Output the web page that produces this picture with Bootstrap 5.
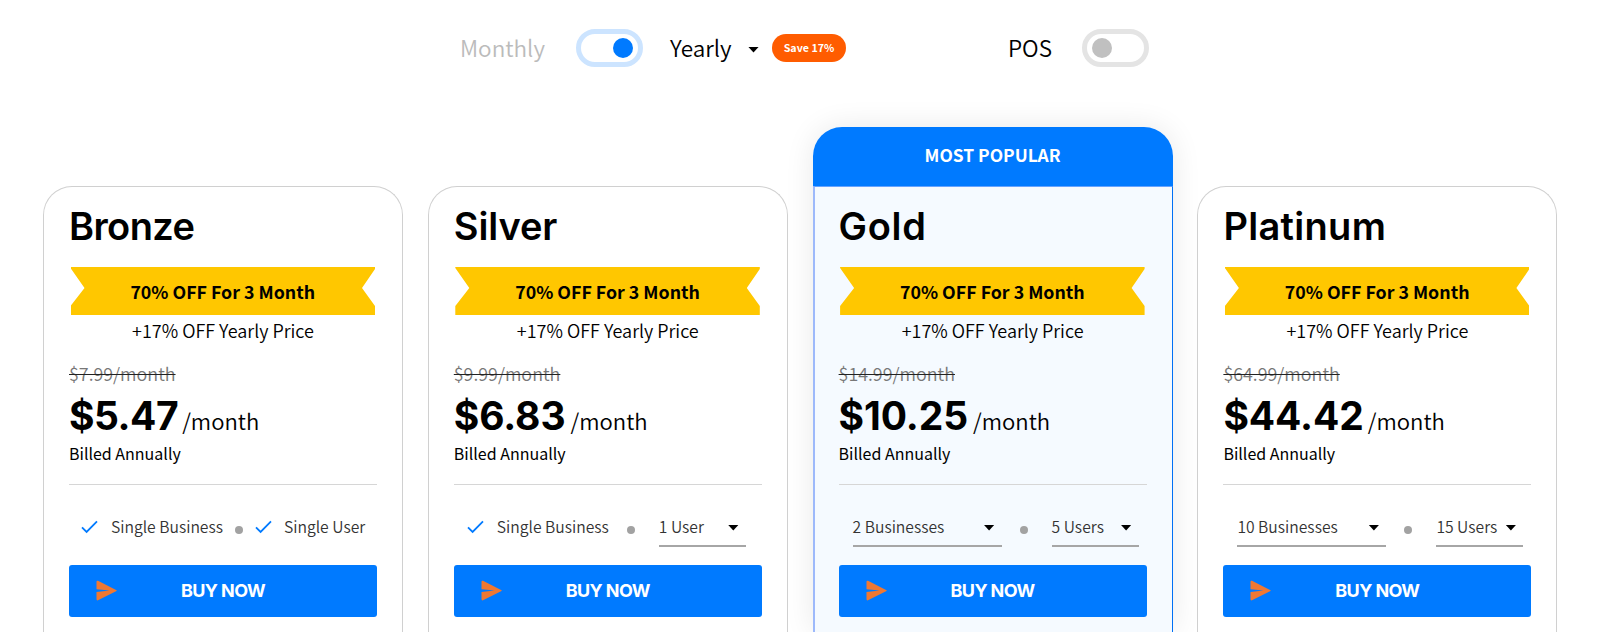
<!DOCTYPE html>
<html lang="en">
<head>
<meta charset="utf-8">
<meta name="viewport" content="width=device-width, initial-scale=1">
<title>Pricing</title>
<link rel="stylesheet" href="https://cdn.jsdelivr.net/npm/bootstrap@5.3.0/dist/css/bootstrap.min.css">
<style>
  body { font-family: "Noto Sans CJK SC", sans-serif; font-weight: 350; color: #000; background: #fff; height: 632px; overflow: hidden; }
  .topbar { height: 95px; padding-left: 460px; }
  .topbar-label { font-size: 22.5px; line-height: 36px; padding-bottom: 2px; }
  .off-label { color: #bbb; width: 116px; }
  .yearly { width: 78px; margin-left: 27px; }
  .pos-label { width: 74px; margin-left: 162px; }
  .toggle { width: 67px; height: 38px; border: 5px solid #cce4ff; border-radius: 19px; padding: 0 5px; }
  .toggle i { width: 20px; height: 20px; border-radius: 50%; background: #007aff; }
  .toggle.is-off { border-color: #e4e4e4; }
  .toggle.is-off i { background: #c0c0c0; }
  .caret { width: 11px; height: 6px; background: #000; clip-path: polygon(0 0, 100% 0, 50% 100%); flex: none; }
  .save { width: 74px; height: 28px; line-height: 27px; border-radius: 14px; background: #ff5c00; color: #fff; font-size: 10.7px; font-weight: 700; margin-left: 13px; }

  .plans { padding: 32px 42.6px 0 43px; gap: 24.8px; height: 537px; }
  .plan { flex: 1 1 0; min-width: 0; }
  .plan-body { margin-top: 59px; height: 446px; border: 1px solid #d0d0d0; border-bottom: 0; border-radius: 29px 29px 0 0; padding: 16px 25px 0; }
  .plan-top { height: 59px; background: #007aff; color: #fff; border-radius: 29px 29px 0 0; font-size: 17.4px; line-height: 56px; font-weight: 700; }
  .plan.popular { border-radius: 29px 29px 0 0; box-shadow: 0 0 30px rgba(0,0,0,.09); }
  .popular .plan-body { margin-top: 0; border-radius: 0; border-color: #66a3ff #0070f5 #66a3ff #9db9fb; background: #f5faff; }
  .popular .plan-body { border-left-width: 2px; padding-left: 24px; }
  .plan-name { font: 600 38px/44px Inter, sans-serif; margin: 0 0 19px; padding-top: 1px; }
  .name-bronze { letter-spacing: -.6px; }
  .name-silver { letter-spacing: -.1px; }
  .name-gold { letter-spacing: .7px; }
  .name-platinum { letter-spacing: .3px; }
  .ribbon { height: 48px; line-height: 48px; margin: 0 2px 0 1.5px; background: #ffc700; font-size: 17.8px; font-weight: 700; text-align: center;
    clip-path: polygon(0 0, 100% 0, 100% 2px, calc(100% - 13px) 21px, 100% 39px, 100% 100%, 0 100%, 0 39px, 14px 21px, 0 1px); }
  .extra { font-size: 18px; line-height: 30px; height: 28px; text-align: center; }
  .was { font-size: 17.9px; line-height: 28px; margin-top: 16px; color: #777; }
  .was s { text-decoration: line-through #222 1px; }
  .price { height: 44px; margin-top: 7px; line-height: 44px; }
  .amount { font: 700 39px/44px Inter, sans-serif; letter-spacing: -.1px; }
  .amount-tight { letter-spacing: -.5px; }
  .per { font-size: 22.1px; margin-left: 4px; }
  .billed { font-size: 16px; line-height: 24px; margin-top: 3px; font-weight: 400; }
  .rule { height: 1px; background: #d6d6d6; margin-top: 19px; }
  .features { height: 62px; font-size: 15.7px; color: #333; white-space: nowrap; padding-top: 27px; }
  .feature { line-height: 26px; height: 26px; margin-top: 2px; flex: none; }
  .feature svg { flex: none; }
  .feature-label { width: 112px; }
  .dot { width: 8px; height: 8px; border-radius: 50%; background: #a2a2a2; margin-top: 14px; flex: none; }
  .pick { height: 35px; line-height: 29px; border-bottom: 2px solid #a6a6a6; flex: none; padding: 0 7px 4px 0; }
  .pick .caret { margin-top: 2px; }
  .pick-wide { width: 149px; }
  .pick-slim { width: 87px; }
  .buy { height: 52px; margin-top: 17.5px; border: 0; border-radius: 3px; background: #007aff; color: #fff; font: 700 18px/52px Inter, sans-serif; letter-spacing: -.6px; padding: 0; }
  .buy svg { position: absolute; left: 27px; top: 15.5px; }
</style>
</head>
<body>
<svg class="d-none" xmlns="http://www.w3.org/2000/svg">
  <symbol id="check" viewBox="0 0 17 14"><path d="M1 7.3l4.6 4.6L16 1.4" fill="none" stroke="#007aff" stroke-width="1.8"/></symbol>
  <symbol id="send" viewBox="0 0 21 21"><path d="M.5 2Q.5.2 2 .8L20.5 10.2Q21 10.6 20.5 11L2 20.3Q.5 20.8.5 19V12L13.5 10.6L.5 9.2Z" fill="#f07832"/></symbol>
</svg>

<div class="topbar d-flex align-items-center">
  <div class="topbar-label off-label">Monthly</div>
  <div class="toggle d-flex align-items-center justify-content-end"><i></i></div>
  <div class="topbar-label yearly">Yearly</div>
  <span class="caret mt-1"></span>
  <div class="save text-center">Save 17%</div>
  <div class="topbar-label pos-label">POS</div>
  <div class="toggle is-off d-flex align-items-center"><i></i></div>
</div>

<div class="plans d-flex">
  <section class="plan">
    <div class="plan-body">
      <h2 class="plan-name name-bronze">Bronze</h2>
      <div class="ribbon">70% OFF For 3 Month</div>
      <div class="extra">+17% OFF Yearly Price</div>
      <div class="was"><s>$7.99/month</s></div>
      <div class="price d-flex align-items-baseline"><span class="amount amount-tight">$5.47</span><span class="per">/month</span></div>
      <div class="billed">Billed Annually</div>
      <div class="rule"></div>
      <div class="features d-flex" style="padding-left:12px">
        <div class="feature d-flex align-items-center"><svg width="17" height="14"><use href="#check"/></svg><span class="feature-label" style="margin-left:13px">Single Business</span></div>
        <span class="dot" style="margin-left:12px;margin-right:12px"></span>
        <div class="feature d-flex align-items-center"><svg width="17" height="14"><use href="#check"/></svg><span style="margin-left:12px">Single User</span></div>
      </div>
      <button class="btn buy w-100 position-relative d-block"><svg width="21" height="21"><use href="#send"/></svg>BUY NOW</button>
    </div>
  </section>

  <section class="plan">
    <div class="plan-body">
      <h2 class="plan-name name-silver">Silver</h2>
      <div class="ribbon">70% OFF For 3 Month</div>
      <div class="extra">+17% OFF Yearly Price</div>
      <div class="was"><s>$9.99/month</s></div>
      <div class="price d-flex align-items-baseline"><span class="amount">$6.83</span><span class="per" style="margin-left:5px">/month</span></div>
      <div class="billed">Billed Annually</div>
      <div class="rule"></div>
      <div class="features d-flex" style="padding-left:13px">
        <div class="feature d-flex align-items-center"><svg width="17" height="14"><use href="#check"/></svg><span class="feature-label" style="margin-left:13px">Single Business</span></div>
        <span class="dot" style="margin-left:18px;margin-right:24px"></span>
        <div class="pick pick-slim d-flex align-items-center justify-content-between">1 User<span class="caret"></span></div>
      </div>
      <button class="btn buy w-100 position-relative d-block"><svg width="21" height="21"><use href="#send"/></svg>BUY NOW</button>
    </div>
  </section>

  <section class="plan popular">
    <div class="plan-top text-center">MOST POPULAR</div>
    <div class="plan-body">
      <h2 class="plan-name name-gold">Gold</h2>
      <div class="ribbon">70% OFF For 3 Month</div>
      <div class="extra">+17% OFF Yearly Price</div>
      <div class="was"><s>$14.99/month</s></div>
      <div class="price d-flex align-items-baseline"><span class="amount">$10.25</span><span class="per" style="margin-left:5px">/month</span></div>
      <div class="billed">Billed Annually</div>
      <div class="rule"></div>
      <div class="features d-flex" style="padding-left:14px">
        <div class="pick pick-wide d-flex align-items-center justify-content-between">2 Businesses<span class="caret"></span></div>
        <span class="dot" style="margin-left:18px;margin-right:24px"></span>
        <div class="pick pick-slim d-flex align-items-center justify-content-between">5 Users<span class="caret"></span></div>
      </div>
      <button class="btn buy w-100 position-relative d-block"><svg width="21" height="21"><use href="#send"/></svg>BUY NOW</button>
    </div>
  </section>

  <section class="plan">
    <div class="plan-body">
      <h2 class="plan-name name-platinum">Platinum</h2>
      <div class="ribbon">70% OFF For 3 Month</div>
      <div class="extra">+17% OFF Yearly Price</div>
      <div class="was"><s>$64.99/month</s></div>
      <div class="price d-flex align-items-baseline"><span class="amount">$44.42</span><span class="per">/month</span></div>
      <div class="billed">Billed Annually</div>
      <div class="rule"></div>
      <div class="features d-flex" style="padding-left:14px">
        <div class="pick pick-wide d-flex align-items-center justify-content-between">10 Businesses<span class="caret"></span></div>
        <span class="dot" style="margin-left:18px;margin-right:24px"></span>
        <div class="pick pick-slim d-flex align-items-center justify-content-between">15 Users<span class="caret"></span></div>
      </div>
      <button class="btn buy w-100 position-relative d-block"><svg width="21" height="21"><use href="#send"/></svg>BUY NOW</button>
    </div>
  </section>
</div>
<script src="https://cdn.jsdelivr.net/npm/bootstrap@5.3.0/dist/js/bootstrap.bundle.min.js"></script>
</body>
</html>
